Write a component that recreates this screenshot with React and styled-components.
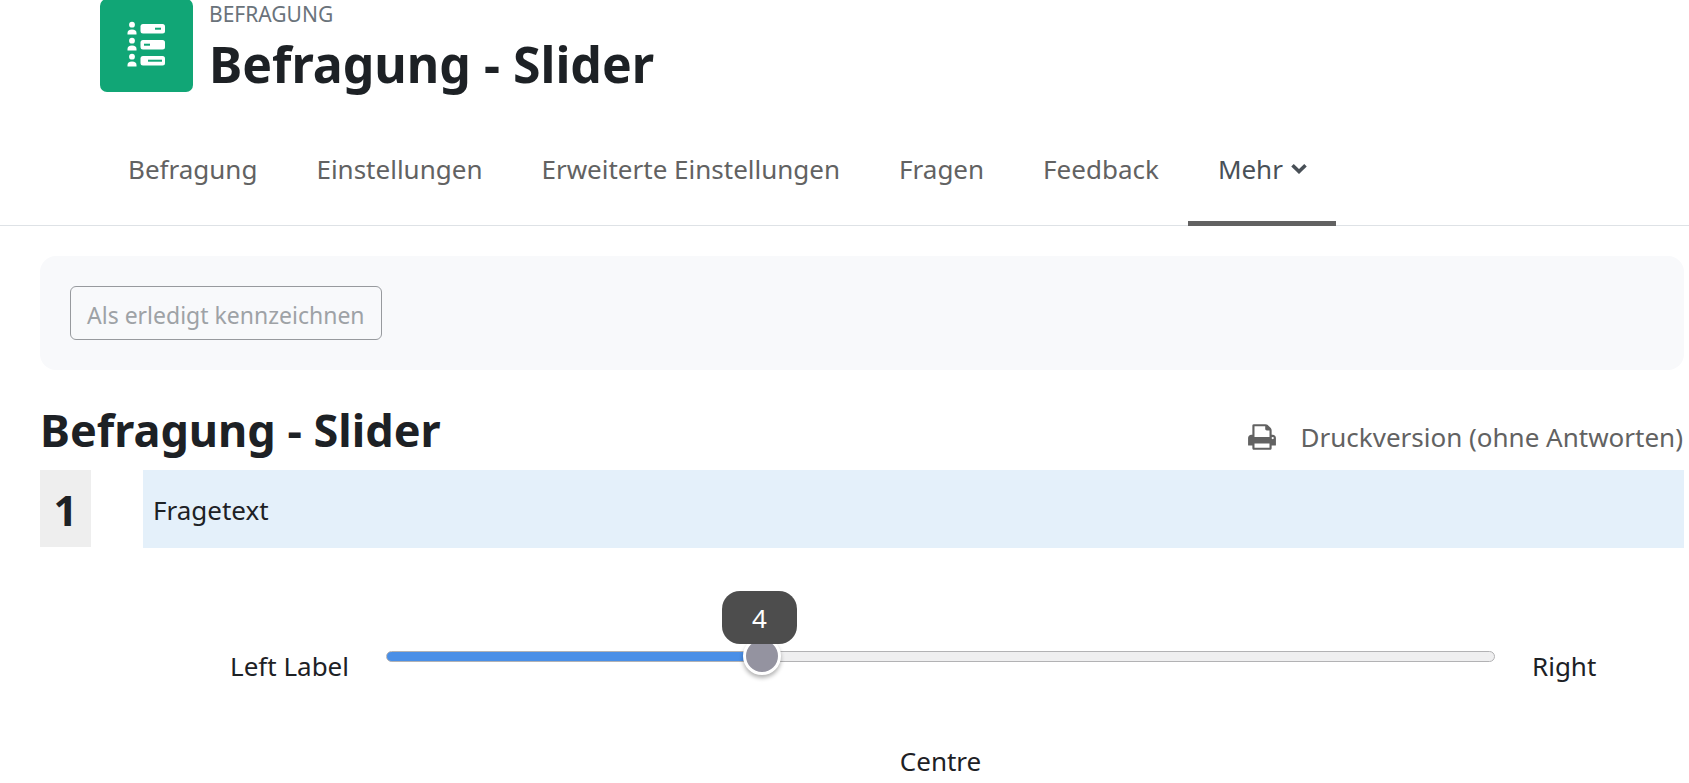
import React, { useState } from 'react';
import styled, { createGlobalStyle } from 'styled-components';

const GlobalStyle = createGlobalStyle`
  *, *::before, *::after { box-sizing: border-box; }
  body {
    margin: 0;
    background: #fff;
    color: #1d2125;
    font-family: 'Noto Sans', 'Open Sans', sans-serif;
    font-size: 26px;
    line-height: 40px;
    overflow-x: hidden;
  }
  h1, h2, p { margin: 0; }
`;

const ActivityHeader = styled.header`
  display: flex;
  gap: 16px;
  margin-top: -1px;
  padding-left: 100px;
`;

const ActivityIcon = styled.div`
  display: flex;
  flex: none;
  width: 93px;
  height: 93px;
  border-radius: 7px;
  background: #11a676;
`;

const ActivityKind = styled.p`
  font-size: 21px;
  line-height: 30px;
  color: #6a737b;
  text-transform: uppercase;
`;

const ActivityTitle = styled.h1`
  font-size: 50px;
  line-height: 70px;
`;

const TabBar = styled.nav`
  display: flex;
  margin-top: 17px;
  padding-left: 98px;
  border-bottom: 1px solid #dee2e6;
`;

const Tab = styled.a`
  display: flex;
  align-items: center;
  gap: 8px;
  height: 110px;
  margin-bottom: -1px;
  padding: 0 29px 0 30px;
  border-bottom: 5px solid ${(p) => (p.$active ? '#626262' : 'transparent')};
  color: ${(p) => (p.$active ? '#495057' : '#626262')};
  text-decoration: none;
  white-space: nowrap;
`;

const Main = styled.main`
  padding: 30px 5px 0 40px;
`;

const CompletionPanel = styled.section`
  padding: 30px;
  border-radius: 16px;
  background: #f8f9fb;
`;

const CompletionButton = styled.button`
  display: block;
  height: 54px;
  padding: 4px 16px 0;
  border: 1px solid #979a9e;
  border-radius: 6px;
  background: transparent;
  color: #9ea2a6;
  font: inherit;
  font-size: 23px;
`;

const SurveyHeading = styled.div`
  display: flex;
  justify-content: space-between;
  align-items: flex-end;
  padding-top: 30px;
`;

const SurveyTitle = styled.h2`
  padding-bottom: 10px;
  font-size: 45px;
  line-height: 60px;
`;

const PrintLink = styled.a`
  display: flex;
  align-items: center;
  gap: 24px;
  padding: 0 1px 13px 0;
  color: #626262;
  text-decoration: none;
`;

const Question = styled.div`
  display: grid;
  grid-template-columns: 51px 1fr;
  gap: 52px;
  align-items: start;
`;

const QuestionNumber = styled.div`
  height: 77px;
  background: #eee;
  font-size: 42px;
  font-weight: 700;
  line-height: 80px;
  text-align: center;
`;

const QuestionText = styled.div`
  height: 78px;
  padding: 0 10px;
  background: #e4f0fa;
  line-height: 80px;
`;

const Scale = styled.div`
  display: grid;
  grid-template-columns: 309px 1fr 152px;
  column-gap: 37px;
  padding-top: 90px;
`;

const ScaleLabel = styled.span`
  padding-top: 8px;
  text-align: ${(p) => p.$align};
`;

const CentreLabel = styled.span`
  grid-column: 2;
  padding-top: 55px;
  text-align: center;
`;

const SliderBox = styled.div`
  position: relative;
`;

const Slider = styled.input`
  appearance: none;
  display: block;
  width: 100%;
  height: 36px;
  margin: 0;
  background: transparent;

  &::-webkit-slider-runnable-track {
    height: 11px;
    border: 1px solid #b2b2b4;
    border-radius: 6px;
    background: linear-gradient(#4a8fe7, #4a8fe7) 0 / var(--filled) 100% no-repeat border-box #efeff0;
  }

  &::-webkit-slider-thumb {
    appearance: none;
    width: 38px;
    height: 38px;
    margin-top: -15px;
    border: 3px solid #fff;
    border-radius: 50%;
    background: #9493a0;
    box-shadow: 0 3px 4px rgba(0, 0, 0, 0.3);
  }
`;

const ValueBubble = styled.output`
  position: absolute;
  bottom: 100%;
  width: 75px;
  height: 53px;
  margin: 0 0 -6px -40px;
  border-radius: 18px;
  background: #4d4d4d;
  color: #fff;
  line-height: 55px;
  text-align: center;
`;

const tabs = ['Befragung', 'Einstellungen', 'Erweiterte Einstellungen', 'Fragen', 'Feedback'];

function SurveyIcon() {
  const rows = [
    { y: 22, bar: [55, 28, 6] },
    { y: 38, bar: [44, 44, 6] },
    { y: 54, bar: [48, 60, 14] },
  ];
  return (
    <svg width="93" height="93" viewBox="0 0 93 93" fill="#fff" aria-hidden="true">
      {rows.map(({ y, bar: [x, by, w] }) => (
        <g key={y}>
          <circle cx="32" cy={y + 3.7} r="2.9" />
          <path d={`M27.5 ${y + 13.5}v-1.500q0-3.600 4.500-3.600t4.500 3.600v1.500z`} />
          <rect x="40.500" y={y + 3} width="24.500" height="9.500" rx="2.500" />
          <rect x={x} y={by + 0.7} width={w} height="2" fill="#11a676" />
        </g>
      ))}
    </svg>
  );
}

function ChevronIcon() {
  return (
    <svg width="16" height="12" viewBox="0 0 16 12" fill="none" stroke="currentColor" strokeWidth="3.600" aria-hidden="true">
      <path d="M1.500 2.300 8 8.600l6.500-6.300" />
    </svg>
  );
}

function PrintIcon() {
  return (
    <svg width="30" height="30" viewBox="0 0 1792 1792" fill="currentColor" aria-hidden="true">
      <path d="M448 1536h896v-256h-896v256zM448 896h896v-384h-160q-40 0-68-28t-28-68v-160h-640v640zM1600 960q0-26-19-45t-45-19-45 19-19 45 19 45 45 19 45-19 19-45zM1728 960v416q0 13-9.500 22.500t-22.500 9.500h-224v160q0 40-28 68t-68 28h-960q-40 0-68-28t-28-68v-160h-224q-13 0-22.500-9.500t-9.500-22.500v-416q0-79 56.500-135.500t135.500-56.500h64v-544q0-40 28-68t68-28h672q40 0 88 20t76 48l152 152q28 28 48 76t20 88v256h64q79 0 135.500 56.500t56.500 135.500z" />
    </svg>
  );
}

function SliderQuestion() {
  const min = 1;
  const max = 10;
  const [value, setValue] = useState(4);
  const percent = ((value - min) / (max - min)) * 100;
  return (
    <Scale>
      <ScaleLabel $align="right">Left Label</ScaleLabel>
      <SliderBox>
        <Slider
          type="range"
          aria-label="Fragetext"
          min={min}
          max={max}
          value={value}
          onChange={(e) => setValue(Number(e.target.value))}
          style={{ '--filled': `${percent}%` }}
        />
        <ValueBubble style={{ left: `calc(${percent}% + ${(50 - percent) * 0.38}px)` }}>{value}</ValueBubble>
      </SliderBox>
      <ScaleLabel $align="left">Right</ScaleLabel>
      <CentreLabel>Centre</CentreLabel>
    </Scale>
  );
}

export default function App() {
  return (
    <>
      <GlobalStyle />
      <ActivityHeader>
        <ActivityIcon>
          <SurveyIcon />
        </ActivityIcon>
        <div>
          <ActivityKind>Befragung</ActivityKind>
          <ActivityTitle>Befragung - Slider</ActivityTitle>
        </div>
      </ActivityHeader>
      <TabBar>
        {tabs.map((name) => (
          <Tab key={name} href="#">{name}</Tab>
        ))}
        <Tab href="#" $active>
          Mehr
          <ChevronIcon />
        </Tab>
      </TabBar>
      <Main>
        <CompletionPanel>
          <CompletionButton type="button">Als erledigt kennzeichnen</CompletionButton>
        </CompletionPanel>
        <SurveyHeading>
          <SurveyTitle>Befragung - Slider</SurveyTitle>
          <PrintLink href="#">
            <PrintIcon />
            Druckversion (ohne Antworten)
          </PrintLink>
        </SurveyHeading>
        <Question>
          <QuestionNumber>1</QuestionNumber>
          <QuestionText>Fragetext</QuestionText>
        </Question>
        <SliderQuestion />
      </Main>
    </>
  );
}
